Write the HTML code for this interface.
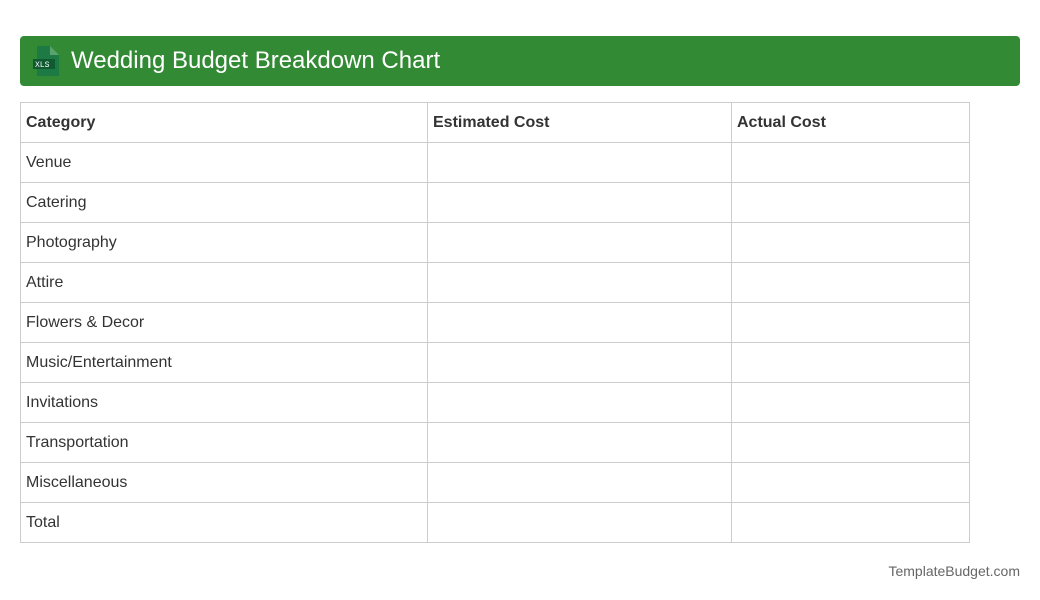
<!DOCTYPE html>
<html><head><style>
body{margin:0;background:#fff;font-family:"Liberation Sans",sans-serif;}
.hdr{position:absolute;left:20px;top:36px;width:1000px;height:50px;background:#338a35;border-radius:4px;}
.hdr .t{position:absolute;left:51px;top:11px;color:#fff;font-size:24px;line-height:28px;}
table{position:absolute;left:20px;top:102px;border-collapse:collapse;width:950px;}
td{border:1px solid #ccc;height:39px;padding:0 5px;font-size:16px;color:#333;}
tr:first-child td{font-weight:bold;}
.f{position:absolute;right:20px;top:563px;font-size:14px;color:#666;}
</style></head><body>
<div class="hdr">
<svg style="position:absolute;left:11px;top:10px" width="30" height="30" viewBox="0 0 30 30">
<path d="M6 0H19L28 9V30H6Z" fill="#1e7a45"/><path d="M19 0L28 9H19Z" fill="#5aa36e"/>
<rect x="2" y="13" width="22" height="10" fill="#0f5a30"/>
<text x="4" y="21" font-size="8" fill="#fff" font-family="Liberation Mono">XLS</text></svg>
<div class="t">Wedding Budget Breakdown Chart</div></div>
<table>
<tr><td style="width:396px">Category</td><td style="width:293px">Estimated Cost</td><td>Actual Cost</td></tr>
<tr><td>Venue</td><td></td><td></td></tr>
<tr><td>Catering</td><td></td><td></td></tr>
<tr><td>Photography</td><td></td><td></td></tr>
<tr><td>Attire</td><td></td><td></td></tr>
<tr><td>Flowers &amp; Decor</td><td></td><td></td></tr>
<tr><td>Music/Entertainment</td><td></td><td></td></tr>
<tr><td>Invitations</td><td></td><td></td></tr>
<tr><td>Transportation</td><td></td><td></td></tr>
<tr><td>Miscellaneous</td><td></td><td></td></tr>
<tr><td>Total</td><td></td><td></td></tr>
</table>
<div class="f">TemplateBudget.com</div>
</body></html>
